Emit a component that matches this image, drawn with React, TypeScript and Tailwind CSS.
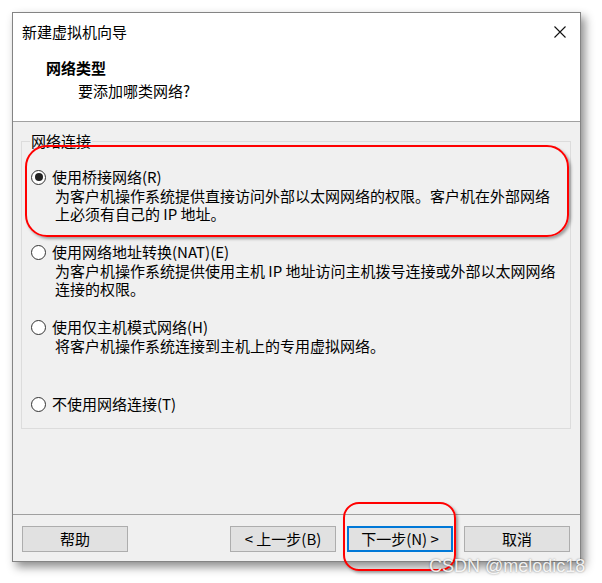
import React from "react";

const font = "font-['Noto_Sans_CJK_SC','Noto_Sans',sans-serif]";

function Radio({ checked }: { checked?: boolean }) {
  return (
    <span className="flex h-[15px] w-[15px] flex-shrink-0 items-center justify-center rounded-full border border-[#333333] bg-white">
      {checked && <span className="h-[8px] w-[8px] rounded-full bg-[#222222]" />}
    </span>
  );
}

function Option({
  label,
  lines,
  checked,
  className = "",
}: {
  label: string;
  lines: string[];
  checked?: boolean;
  className?: string;
}) {
  return (
    <div className={className}>
      <div className="flex h-[20px] items-center gap-[6px] pl-[9px]">
        <Radio checked={checked} />
        <span className="leading-[20px]">{label}</span>
      </div>
      {lines.map((l) => (
        <div key={l} className="h-[18px] pl-[33px] leading-[18px] whitespace-pre">
          {l}
        </div>
      ))}
    </div>
  );
}

function Button({ children, focused }: { children: React.ReactNode; focused?: boolean }) {
  return (
    <button
      className={
        focused
          ? "flex h-[26px] w-[106px] items-center justify-center border-2 border-[#0078d7] bg-[#e1e1e1] text-[15px] leading-[20px]"
          : "flex h-[26px] w-[106px] items-center justify-center border border-[#adadad] bg-[#e1e1e1] text-[15px] leading-[20px]"
      }
    >
      {children}
    </button>
  );
}

export default function App() {
  return (
    <div className={`relative h-[583px] w-[602px] overflow-hidden bg-white pl-[12px] pt-[12px] text-[15px] text-black ${font}`}>
      <div className="flex h-[550px] w-[569px] flex-col border border-[#848484] bg-white shadow-[4px_5px_9px_rgba(0,0,0,0.45)]">
        {/* Title bar */}
        <div className="flex h-[38px] items-center justify-between pl-[9px] pr-[14px]">
          <span className="leading-[20px]">新建虚拟机向导</span>
          <svg width="12" height="12" viewBox="0 0 12 12">
            <path d="M0.5 0.5 L11.5 11.5 M11.5 0.5 L0.5 11.5" stroke="#111" strokeWidth="1.1" />
          </svg>
        </div>

        {/* Header */}
        <div className="flex h-[71px] flex-col gap-[3px] border-b border-[#a0a0a0] pt-[7px]">
          <div className="pl-[33px] font-bold leading-[20px]">网络类型</div>
          <div className="pl-[65px] leading-[20px]">要添加哪类网络?</div>
        </div>

        {/* Body */}
        <div className="flex-1 bg-[#f0f0f0] pl-[8px] pr-[9px] pt-[9px]">
          <fieldset className="h-[298px] border border-[#dcdcdc] pb-[15px]">
            <legend className="ml-[8px] px-[1px] leading-[20px]">网络连接</legend>
            <Option
              className="mt-[16px]"
              checked
              label="使用桥接网络(R)"
              lines={["为客户机操作系统提供直接访问外部以太网网络的权限。客户机在外部网络", "上必须有自己的 IP 地址。"]}
            />
            <Option
              className="mt-[19px]"
              label="使用网络地址转换(NAT)(E)"
              lines={["为客户机操作系统提供使用主机 IP 地址访问主机拨号连接或外部以太网网络", "连接的权限。"]}
            />
            <Option
              className="mt-[19px]"
              label="使用仅主机模式网络(H)"
              lines={["将客户机操作系统连接到主机上的专用虚拟网络。"]}
            />
            <Option className="mt-[39px]" label="不使用网络连接(T)" lines={[]} />
          </fieldset>
        </div>

        {/* Footer */}
        <div className="flex h-[47px] items-start border-t border-[#a0a0a0] bg-[#f0f0f0] pl-[9px] pr-[10px] pt-[11px]">
          <Button>帮助</Button>
          <div className="flex-1" />
          <div className="flex gap-[11px]">
            <Button>&lt; 上一步(B)</Button>
            <Button focused>下一步(N) &gt;</Button>
            <Button>取消</Button>
          </div>
        </div>
      </div>

      {/* Annotations */}
      <div className="absolute left-[25px] top-[145px] h-[92px] w-[544px] rounded-[22px] border-2 border-[#ff0000] shadow-[2px_2px_3px_rgba(0,0,0,0.35)]" />
      <div className="absolute left-[343px] top-[502px] h-[69px] w-[113px] rounded-[16px] border-2 border-[#ff0000] shadow-[2px_2px_3px_rgba(0,0,0,0.35)]" />
      <div className="absolute left-[429px] top-[555px] font-['Liberation_Sans',Arial,sans-serif] text-[18px] leading-[22px] text-[rgba(255,255,255,0.9)] [text-shadow:0_0_2px_rgba(0,0,0,0.45)]">
        CSDN @melodic18
      </div>
    </div>
  );
}
